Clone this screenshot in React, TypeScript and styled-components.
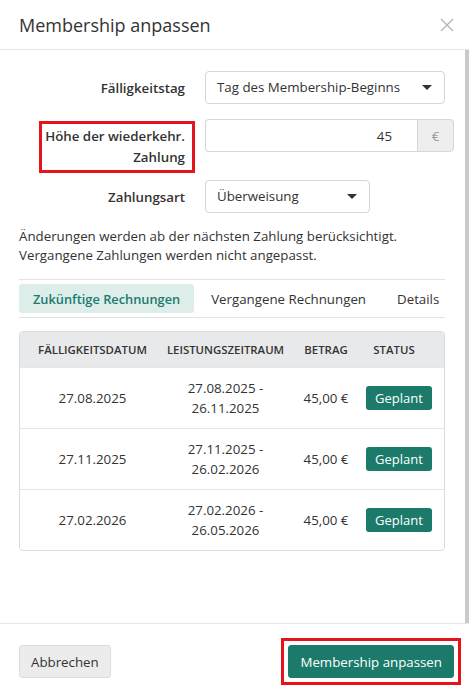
import React from "react";
import styled, { createGlobalStyle } from "styled-components";

const teal = "#1b7a6a";

const GlobalStyle = createGlobalStyle`
  html, body {
    margin: 0;
    padding: 0;
    background: #fff;
  }
  body {
    font-family: "Open Sans", "Liberation Sans", sans-serif;
    font-size: 13.3px;
    color: #333;
  }
  * {
    box-sizing: border-box;
  }
`;

interface Invoice {
  due: string;
  from: string;
  to: string;
  amount: string;
}

const invoices: Invoice[] = [
  { due: "27.08.2025", from: "27.08.2025", to: "26.11.2025", amount: "45,00 €" },
  { due: "27.11.2025", from: "27.11.2025", to: "26.02.2026", amount: "45,00 €" },
  { due: "27.02.2026", from: "27.02.2026", to: "26.05.2026", amount: "45,00 €" },
];

const Caret = () => (
  <svg width="10" height="5" viewBox="0 0 10 5">
    <path d="M0 0h10L5 5z" fill="#333" />
  </svg>
);

const CloseIcon = () => (
  <svg width="14" height="14" viewBox="0 0 14 14">
    <path d="M1 1l12 12M13 1L1 13" stroke="#b5b5b5" strokeWidth="1.4" fill="none" />
  </svg>
);

const App: React.FC = () => {
  return (
    <Modal>
      <GlobalStyle />
      <Header>
        <Title>Membership anpassen</Title>
        <CloseButton aria-label="Schließen">
          <CloseIcon />
        </CloseButton>
      </Header>

      <Body>
        <Field $spacing={15}>
          <Label>Fälligkeitstag</Label>
          <Select>
            <span>Tag des Membership-Beginns</span>
            <Caret />
          </Select>
        </Field>

        <Field $spacing={7} $align="start">
          <Label $highlight>
            Höhe der wiederkehr.
            <br />
            Zahlung
          </Label>
          <InputGroup>
            <AmountInput defaultValue="45" />
            <Addon>€</Addon>
          </InputGroup>
        </Field>

        <Field $spacing={0}>
          <Label>Zahlungsart</Label>
          <Select $width={165}>
            <span>Überweisung</span>
            <Caret />
          </Select>
        </Field>

        <Note>
          Änderungen werden ab der nächsten Zahlung berücksichtigt.
          <br />
          Vergangene Zahlungen werden nicht angepasst.
        </Note>

        <Tabs>
          <Tab $active>Zukünftige Rechnungen</Tab>
          <Tab>Vergangene Rechnungen</Tab>
          <Tab>Details</Tab>
        </Tabs>

        <InvoiceTable>
          <HeadRow>
            <HeadCell>Fälligkeitsdatum</HeadCell>
            <HeadCell>Leistungszeitraum</HeadCell>
            <HeadCell>Betrag</HeadCell>
            <HeadCell>Status</HeadCell>
          </HeadRow>
          {invoices.map((inv) => (
            <Row key={inv.due}>
              <Cell>{inv.due}</Cell>
              <Cell>
                {inv.from} -
                <br />
                {inv.to}
              </Cell>
              <Cell>{inv.amount}</Cell>
              <Cell>
                <Badge>Geplant</Badge>
              </Cell>
            </Row>
          ))}
        </InvoiceTable>
      </Body>

      <Footer>
        <Button>Abbrechen</Button>
        <Marker>
          <Button $primary>Membership anpassen</Button>
        </Marker>
      </Footer>
    </Modal>
  );
};

export default App;

const Modal = styled.div`
  display: flex;
  flex-direction: column;
  height: 100vh;
  width: 100%;
  background: #fff;
`;

const Header = styled.div`
  flex: none;
  height: 50px;
  display: flex;
  align-items: center;
  justify-content: space-between;
  padding: 0 15px 0 19px;
  border-bottom: 1px solid #e6e6e6;
`;

const Title = styled.h4`
  margin: 0;
  font-size: 18px;
  font-weight: 400;
  color: #333;
`;

const CloseButton = styled.button`
  border: none;
  background: none;
  padding: 0;
  display: flex;
  margin-top: 1px;
`;

/* scroll area; the right border stands in for the always-visible scrollbar */
const Body = styled.div`
  flex: 1;
  min-height: 0;
  overflow: hidden;
  padding: 21px 20px 0 19px;
  border-right: 4px solid #c9c9c9;
`;

const Field = styled.div<{ $spacing: number; $align?: string }>`
  display: grid;
  grid-template-columns: 176px 1fr;
  column-gap: 10px;
  align-items: ${(p) => p.$align || "center"};
  margin-bottom: ${(p) => p.$spacing}px;
`;

const Label = styled.label<{ $highlight?: boolean }>`
  justify-self: end;
  text-align: right;
  font-weight: 600;
  line-height: 20px;
  padding-right: 10px;
  ${(p) =>
    p.$highlight &&
    `
    margin-top: 2px;
    padding: 2px 7px 2px 3px;
    border: 3px solid #e5141b;
    line-height: 21px;
  `}
`;

const Select = styled.div<{ $width?: number }>`
  width: ${(p) => (p.$width ? `${p.$width}px` : "100%")};
  height: 33px;
  display: flex;
  align-items: center;
  justify-content: space-between;
  padding: 0 12px 0 11px;
  border: 1px solid #d6d6d6;
  border-radius: 4px;
  background: #fff;
  line-height: 1;
`;

const InputGroup = styled.div`
  display: flex;
  height: 33px;
`;

const AmountInput = styled.input`
  flex: 1;
  min-width: 0;
  border: 1px solid #d6d6d6;
  border-right: none;
  border-radius: 4px 0 0 4px;
  padding: 0 25px 0 11px;
  text-align: right;
  font: inherit;
  color: #333;
  outline: none;
`;

const Addon = styled.span`
  width: 37px;
  display: flex;
  align-items: center;
  justify-content: center;
  background: #eee;
  color: #999;
  border: 1px solid #d6d6d6;
  border-radius: 0 4px 4px 0;
`;

const Note = styled.p`
  margin: 14px 0 14px;
  line-height: 19px;
`;

const Tabs = styled.div`
  display: flex;
  gap: 3px;
  padding: 4px 0;
  border-top: 1px solid #e2e2e2;
  border-bottom: 1px solid #e2e2e2;
`;

const Tab = styled.div<{ $active?: boolean }>`
  flex: none;
  white-space: nowrap;
  height: 29px;
  display: flex;
  align-items: center;
  padding: 0 14px;
  border-radius: 3px;
  font-size: ${(p) => (p.$active ? 12.8 : 13.3)}px;
  font-weight: ${(p) => (p.$active ? 600 : 400)};
  color: ${(p) => (p.$active ? teal : "#333")};
  background: ${(p) => (p.$active ? "#dcedea" : "transparent")};
`;

const InvoiceTable = styled.div`
  margin-top: 13px;
  border: 1px solid #dcdcdc;
  border-radius: 4px;
  overflow: hidden;
`;

const HeadRow = styled.div`
  display: grid;
  grid-template-columns: 145px 121px 80px 1fr;
  height: 35px;
  align-items: center;
  background: #e8e9eb;
`;

const HeadCell = styled.div`
  text-align: center;
  font-size: 11.4px;
  font-weight: 600;
  text-transform: uppercase;
  color: #333;
  &:last-child {
    padding-right: 22px;
  }
`;

const Row = styled.div`
  display: grid;
  grid-template-columns: 145px 121px 80px 1fr;
  height: 61px;
  align-items: center;
  border-top: 1px solid #e6e6e6;
`;

const Cell = styled.div`
  text-align: center;
  line-height: 20px;
  &:last-child {
    padding-right: 24px;
  }
`;

const Badge = styled.span`
  display: inline-block;
  height: 24px;
  line-height: 24px;
  padding: 0 9px;
  border-radius: 3px;
  background: ${teal};
  color: #fff;
  font-size: 13px;
`;

const Footer = styled.div`
  flex: none;
  height: 73px;
  display: flex;
  align-items: flex-start;
  justify-content: space-between;
  padding: 14px 8px 0 19px;
  border-top: 1px solid #e6e6e6;
`;

/* red frame drawn round the primary action */
const Marker = styled.div`
  display: flex;
  padding: 4px;
  border: 3px solid #e5141b;
`;

const Button = styled.button<{ $primary?: boolean }>`
  height: 33px;
  padding: 0 11px;
  margin-top: ${(p) => (p.$primary ? 0 : 7)}px;
  border-radius: 3px;
  font: inherit;
  border: 1px solid ${(p) => (p.$primary ? teal : "#dcdcdc")};
  background: ${(p) => (p.$primary ? teal : "#ececec")};
  color: ${(p) => (p.$primary ? "#fff" : "#333")};
`;
